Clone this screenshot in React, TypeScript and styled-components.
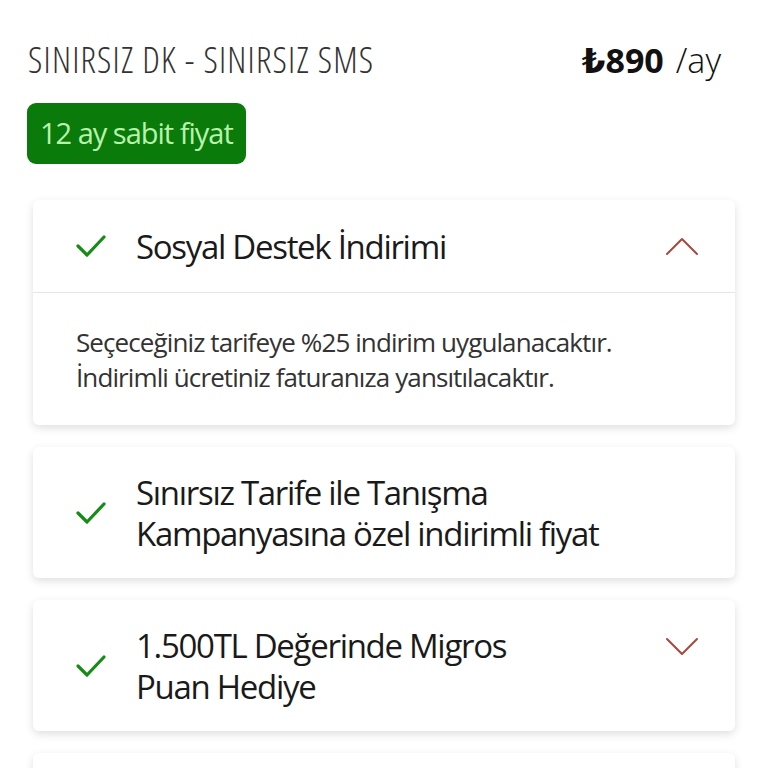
import styled, { createGlobalStyle } from 'styled-components';

const GlobalStyle = createGlobalStyle`
    body {
        margin: 0;
        background: #ffffff;
        font-family: "Open Sans", "DejaVu Sans", sans-serif;
        color: #222;
    }
`;

const Page = styled.div`
    padding: 35px 27px 0 27px;
    height: 768px;
    overflow: hidden;
    box-sizing: border-box;
`;

const TopRow = styled.div`
    display: flex;
    justify-content: space-between;
    align-items: center;
    padding-right: 20px;
`;

const PlanTitle = styled.span`
    font-size: 36px;
    font-weight: 300;
    font-stretch: 75%;
    letter-spacing: 1.2px;
    color: #333;
    padding-left: 1px;
`;

const Price = styled.span`
    font-size: 34px;
    font-weight: 300;
    color: #111;
`;

const PriceAmount = styled.b`
    font-weight: 700;
    margin-right: 12px;
`;

const Badge = styled.div`
    display: inline-block;
    margin-top: 19px;
    background: #0a7a0a;
    color: #b8f2ab;
    border-radius: 9px;
    padding: 10px 13px 12px 13px;
    font-size: 29px;
    letter-spacing: -1px;
`;

const CardList = styled.div`
    display: flex;
    flex-direction: column;
    gap: 22px;
    margin: 36px 6px 0 6px;
`;

const Card = styled.div`
    background: #fff;
    border-radius: 6px;
    box-shadow: 0 3px 9px rgba(0, 0, 0, 0.13);
`;

const CardHeader = styled.div<{ $tall?: boolean }>`
    display: flex;
    align-items: center;
    height: ${p => (p.$tall ? '131px' : '92px')};
    padding: 0 36px 0 42px;
`;

const CheckIcon = styled.svg`
    width: 32px;
    height: 26px;
    flex-shrink: 0;
    margin-right: 29px;
`;

const ItemTitle = styled.div`
    flex: 1;
    font-size: 33px;
    letter-spacing: -1.3px;
    line-height: 41px;
    color: #1a1a1a;
`;

const Chevron = styled.svg<{ $top?: boolean }>`
    width: 34px;
    height: 20px;
    flex-shrink: 0;
    align-self: ${p => (p.$top ? 'flex-start' : 'center')};
    margin-top: ${p => (p.$top ? '37px' : '0')};
`;

const Divider = styled.div`
    height: 1px;
    background: #e6e6e6;
`;

const CardBody = styled.div`
    padding: 32px 42px 30px 43px;
    font-size: 26px;
    letter-spacing: -0.9px;
    line-height: 35px;
    color: #333;
`;

const Check = () => (
    <CheckIcon viewBox="0 0 32 26">
        <path d="M3 13 L12 22 L29 4" fill="none" stroke="#168c16" strokeWidth="3.2" strokeLinecap="round" strokeLinejoin="round" />
    </CheckIcon>
);

const ChevronUp = () => (
    <Chevron viewBox="0 0 34 20">
        <path d="M2 18 L17 3 L32 18" fill="none" stroke="#a8483f" strokeWidth="2" strokeLinecap="round" strokeLinejoin="round" />
    </Chevron>
);

const ChevronDown = () => (
    <Chevron viewBox="0 0 34 20" $top>
        <path d="M2 2 L17 17 L32 2" fill="none" stroke="#a8483f" strokeWidth="2" strokeLinecap="round" strokeLinejoin="round" />
    </Chevron>
);

const App = () => {
    return <>
        <GlobalStyle />
        <Page>
            <TopRow>
                <PlanTitle>SINIRSIZ DK - SINIRSIZ SMS</PlanTitle>
                <Price><PriceAmount>₺890</PriceAmount>/ay</Price>
            </TopRow>
            <Badge>12 ay sabit fiyat</Badge>
            <CardList>
                <Card>
                    <CardHeader>
                        <Check />
                        <ItemTitle>Sosyal Destek İndirimi</ItemTitle>
                        <ChevronUp />
                    </CardHeader>
                    <Divider />
                    <CardBody>
                        Seçeceğiniz tarifeye %25 indirim uygulanacaktır.<br />
                        İndirimli ücretiniz faturanıza yansıtılacaktır.
                    </CardBody>
                </Card>
                <Card>
                    <CardHeader $tall>
                        <Check />
                        <ItemTitle>Sınırsız Tarife ile Tanışma<br />Kampanyasına özel indirimli fiyat</ItemTitle>
                    </CardHeader>
                </Card>
                <Card>
                    <CardHeader $tall>
                        <Check />
                        <ItemTitle>1.500TL Değerinde Migros<br />Puan Hediye</ItemTitle>
                        <ChevronDown />
                    </CardHeader>
                </Card>
                <Card>
                    <CardHeader $tall />
                </Card>
            </CardList>
        </Page>
    </>;
};

export default App;
